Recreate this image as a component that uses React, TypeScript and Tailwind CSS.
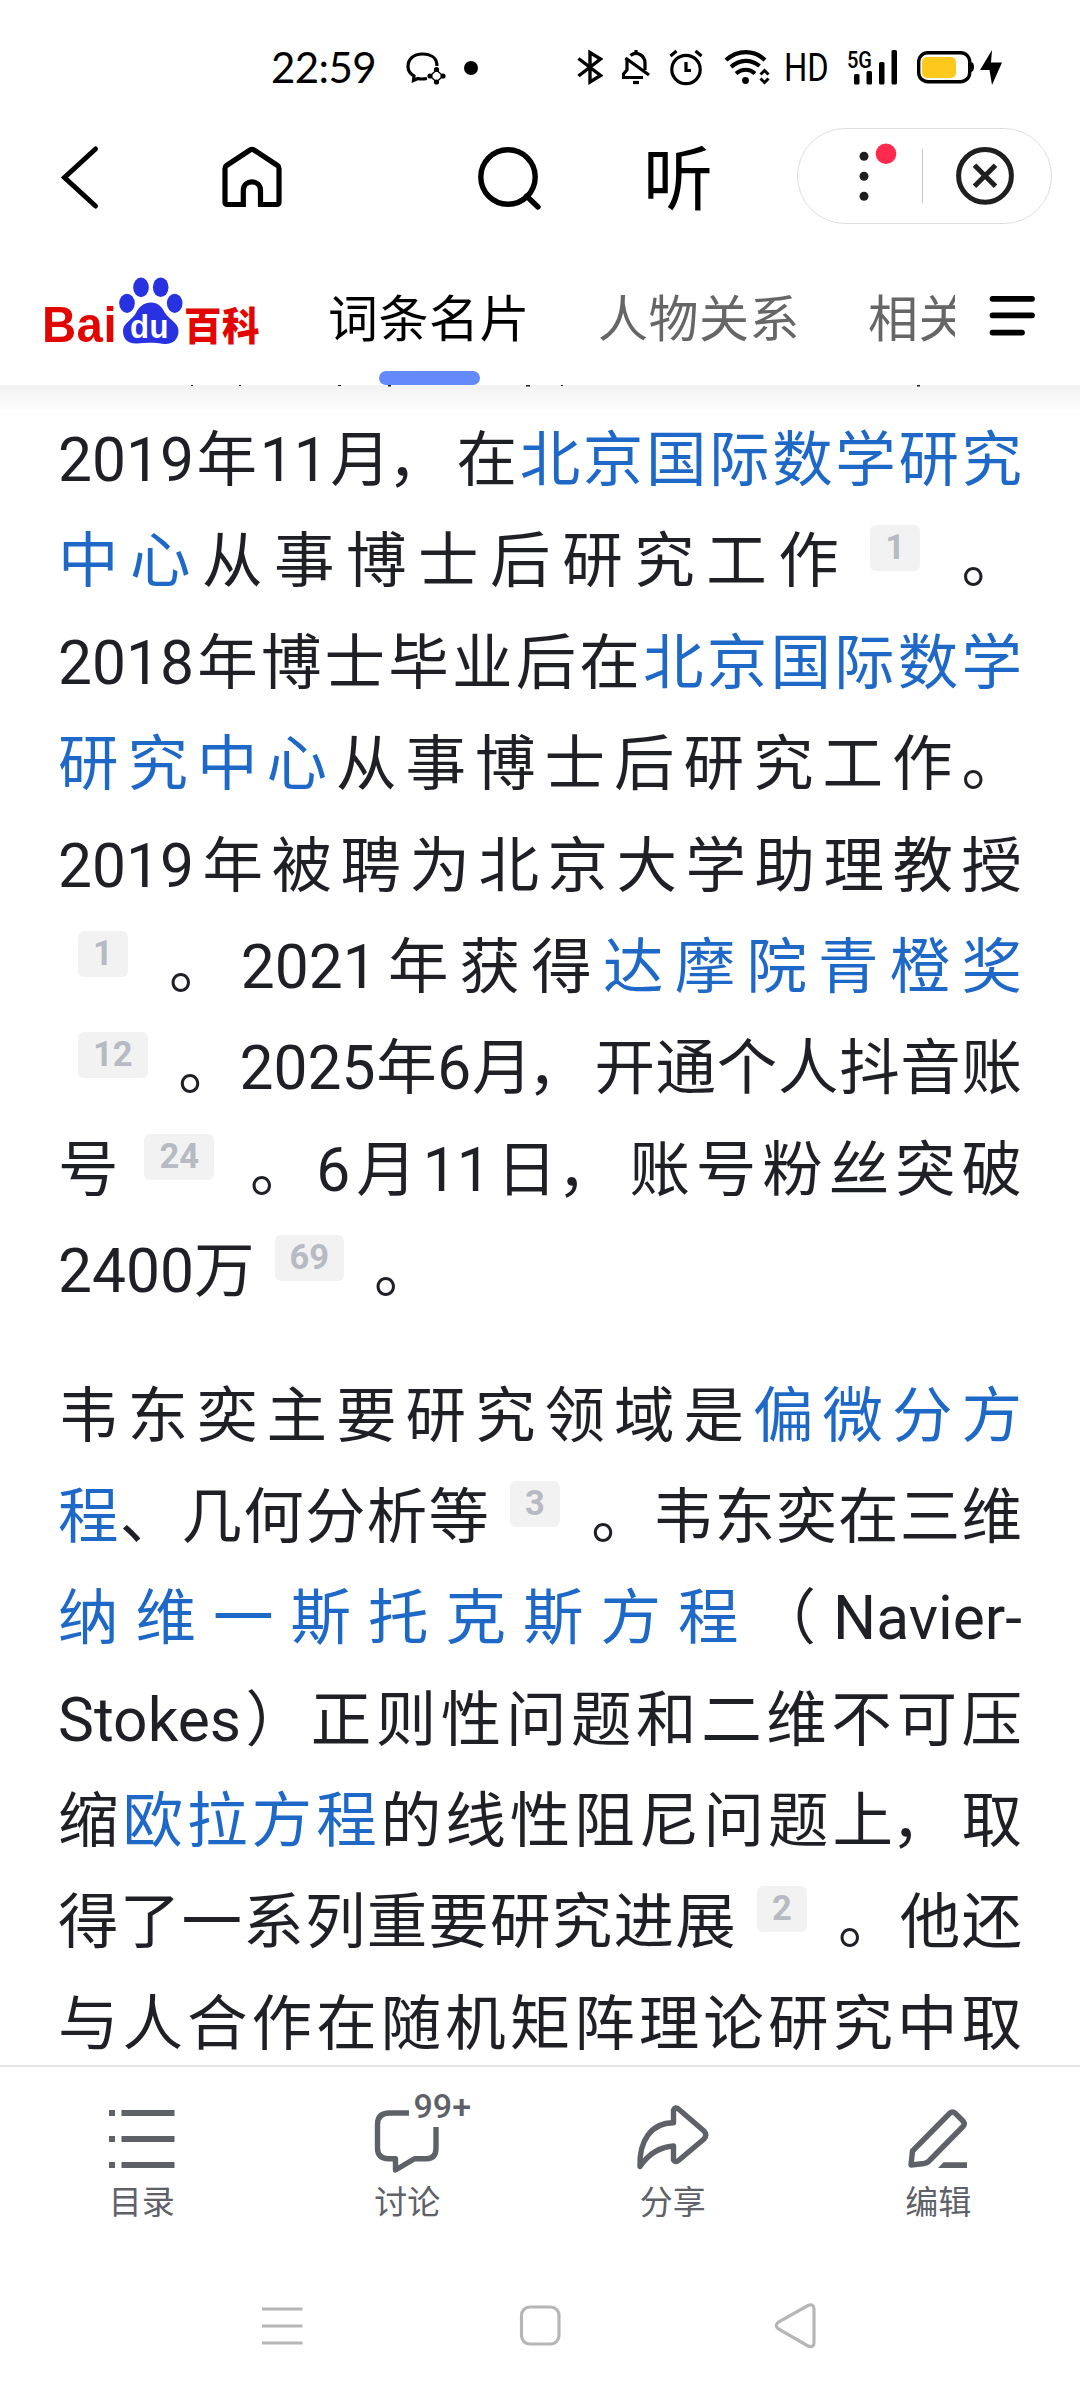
import React from 'react';
import { clsx } from 'clsx';

type Segment = string | { link: string } | { cite: number };

type Line = {
  segments: Segment[];
  last?: boolean; // last line of a paragraph is not justified
};

const CAREER: Line[] = [
  { segments: ['2019年11月，在', { link: '北京国际数学研究' }] },
  { segments: [{ link: '中心' }, '从事博士后研究工作', { cite: 1 }, '。'] },
  { segments: ['2018年博士毕业后在', { link: '北京国际数学' }] },
  { segments: [{ link: '研究中心' }, '从事博士后研究工作。'] },
  { segments: ['2019年被聘为北京大学助理教授'] },
  { segments: [{ cite: 1 }, '。2021年获得', { link: '达摩院青橙奖' }] },
  { segments: [{ cite: 12 }, '。2025年6月，开通个人抖音账'] },
  { segments: ['号', { cite: 24 }, '。6月11日，账号粉丝突破'] },
  { segments: ['2400万', { cite: 69 }, '。'], last: true },
];

const RESEARCH: Line[] = [
  { segments: ['韦东奕主要研究领域是', { link: '偏微分方' }] },
  { segments: [{ link: '程' }, '、几何分析等', { cite: 3 }, '。韦东奕在三维'] },
  { segments: [{ link: '纳维一斯托克斯方程' }, '（Navier-'] },
  { segments: ['Stokes）正则性问题和二维不可压'] },
  { segments: ['缩', { link: '欧拉方程' }, '的线性阻尼问题上，取'] },
  { segments: ['得了一系列重要研究进展', { cite: 2 }, '。他还'] },
  { segments: ['与人合作在随机矩阵理论研究中取'] },
];

const StatusBar = () => (
  <div className="flex h-[128px] items-start pt-[48px] pl-[271px]">
    <span className="w-[106px] font-['Lato'] text-[42px] leading-[38px] tracking-[-0.6px] text-black">22:59</span>

    {/* Chat bubble with a sparkle */}
    <svg className="ml-[28px] h-[38px] w-[42px]" viewBox="405 48 42 38" fill="none">
      <path d="M437 66C437 58 431 54 422.500 54C413.500 54 408 59 408 66.500C408 71 410.500 74 414 76L413.500 80.500L418 78.500C421 79.500 424 79 427 78.500" stroke="black" strokeWidth="3.200" />
      <path d="M436.500 70L443 76L436.500 82L430 76Z" stroke="black" strokeWidth="1.300" />
      <circle cx="436.500" cy="69.500" r="2.600" fill="black" />
      <circle cx="443" cy="76" r="2.600" fill="black" />
      <circle cx="436.500" cy="82" r="2.600" fill="black" />
      <circle cx="430" cy="76" r="2.600" fill="black" />
    </svg>
    <span className="mt-[13px] ml-[17px] size-[14px] rounded-full bg-black" />

    {/* Bluetooth */}
    <svg className="ml-[99px] h-[38px] w-[26px]" viewBox="577 48 26 38" fill="none" stroke="black" strokeWidth="3.400">
      <path d="M578.500 58.500L600.500 75.500L590 82V52.500L600.500 59L578.500 76" />
    </svg>
    {/* Muted bell */}
    <svg className="ml-[19px] h-[38px] w-[28px]" viewBox="622 48 28 38" fill="none" stroke="black" strokeWidth="3.200">
      <path d="M636 50V53M630.500 55.500C633 53.500 637 53 640 54.500C643.500 56.500 645 60 645 63V70M627 60V70L623.500 74V77.500H643M625.500 58L649 75" />
      <path d="M633 82.500H639" />
    </svg>
    {/* Alarm */}
    <svg className="ml-[19px] h-[38px] w-[34px]" viewBox="669 48 34 38" fill="none" stroke="black" strokeWidth="3.200">
      <circle cx="686" cy="69.500" r="14.200" />
      <path d="M686 62V70.500H691M670.500 56L676.500 51M695.500 51L701.500 56" />
    </svg>
    {/* Wi-Fi */}
    <svg className="ml-[21px] h-[38px] w-[46px]" viewBox="724 48 46 38" fill="none" stroke="black" strokeWidth="4.200">
      <path d="M726 60C738 49.500 754 49.500 765 60M731 67C740 59 751 59 759.500 66M736 73.500C742 68.500 749.500 68.500 755 73.500" />
      <circle cx="745.500" cy="80.500" r="3.400" fill="black" stroke="none" />
      <path d="M760.500 74.500L764.500 70.500L768.500 74.500M760.500 78.500L764.500 82.500L768.500 78.500" strokeWidth="3" />
    </svg>
    <span className="ml-[14px] w-[47px] origin-left scale-x-[0.86] font-['Roboto'] text-[38px] leading-[40px] text-black">HD</span>

    {/* Signal strength */}
    <svg className="ml-[15px] h-[38px] w-[52px] overflow-visible" viewBox="846 48 52 38">
      <text x="847" y="67.500" textLength="25" lengthAdjust="spacingAndGlyphs" fontFamily="Roboto" fontSize="24" fontWeight="500">5G</text>
      <rect x="854" y="74" width="5.500" height="10.500" rx="1.500" />
      <rect x="866.500" y="71" width="5.500" height="13.500" rx="1.500" />
      <rect x="879" y="62" width="5.500" height="22.500" rx="1.500" />
      <rect x="891.500" y="50" width="5.500" height="34.500" rx="1.500" />
    </svg>
    {/* Battery */}
    <svg className="ml-[18px] h-[38px] w-[88px]" viewBox="916 48 88 38">
      <rect x="918.700" y="52.700" width="51" height="29" rx="9" fill="none" stroke="black" strokeWidth="3.400" />
      <rect x="922" y="57" width="34" height="21" rx="5" fill="#fdc91d" />
      <path d="M971 62C975 62 975 72 971 72Z" />
      <path d="M992 50L980 70H989.500L992 85L1002 62.500H991Z" />
    </svg>
  </div>
);

const NavBar = () => (
  <div className="flex h-[96px] items-center">
    <svg className="ml-[60px] h-[70px] w-[42px]" viewBox="60 141 42 70" fill="none" stroke="black" strokeWidth="5" strokeLinecap="round">
      <path d="M95.500 149L64.500 177.500L95.500 206" />
    </svg>
    <svg className="ml-[118px] h-[70px] w-[64px]" viewBox="220 141 64 70" fill="none" stroke="black" strokeWidth="5.200">
      <path d="M243.300 207V190.500C243.300 179 260.500 179 260.500 190.500V204.500H276.500Q279 204.500 279 202V168.500Q279 166.500 277.500 165.500L254 150Q252 148.800 250 150L226.500 165.500Q225 166.500 225 168.500V202Q225 204.500 227.500 204.500H243.300" />
    </svg>
    <svg className="ml-[192px] h-[70px] w-[68px]" viewBox="476 141 68 70" fill="none" stroke="black" strokeWidth="5.400">
      <circle cx="508" cy="177" r="27.200" />
      <path d="M526.500 196L538 207" strokeLinecap="round" />
    </svg>
    <span className="ml-[99px] font-['Noto_Sans_CJK_SC'] text-[70px] leading-[92px] text-black">
      <span className="block -translate-y-[1px]">听</span>
    </span>
    <div className="ml-[84px] flex h-[96px] w-[255px] items-center rounded-full border border-[#dedede]">
      <svg className="ml-[50px] h-[70px] w-[50px]" viewBox="848 141 50 70" fill="#1f1f1f">
        <circle cx="864" cy="156.200" r="4.500" />
        <circle cx="864" cy="176.200" r="4.500" />
        <circle cx="864" cy="196.200" r="4.500" />
        <circle cx="886" cy="153.800" r="10.300" fill="#ff2a4d" />
      </svg>
      <span className="ml-[24px] h-[54px] w-px bg-[#c8c8c8]" />
      <svg className="ml-[31px] h-[62px] w-[62px]" viewBox="953.500 145 62 62" fill="none" stroke="#1f1f1f" strokeWidth="5">
        <circle cx="984.500" cy="175.800" r="26.400" />
        <path d="M974 165.300L995 186.300M995 165.300L974 186.300" />
      </svg>
    </div>
  </div>
);

const BaikeLogo = () => (
  <svg className="ml-[40px] h-[80px] w-[224px] overflow-visible" viewBox="40 269 224 80">
    <text x="42" y="342" textLength="75" lengthAdjust="spacingAndGlyphs" fill="#e10601" fontFamily="Liberation Sans" fontSize="50" fontWeight="700">Bai</text>
    <g fill="#2932e1">
      <ellipse cx="127" cy="303.300" rx="7.800" ry="9.600" />
      <ellipse cx="141" cy="287.400" rx="7.800" ry="9.800" />
      <ellipse cx="160.700" cy="287.200" rx="7.800" ry="9.800" />
      <ellipse cx="174.700" cy="303.300" rx="7.800" ry="9.600" />
      <path d="M151 302.500C143 302.500 138 308 136 313C132 320 123 323 123 331C123 340 129 344 137 343.500C146 342.500 156 342.500 164 344C173 344.500 178.500 339 178.500 331C178.500 323 170 320 165 313C162 307 158 302.500 151 302.500Z" />
    </g>
    <text x="130" y="338" textLength="39" lengthAdjust="spacingAndGlyphs" fill="white" fontFamily="Liberation Sans" fontSize="33" fontWeight="700">du</text>
    <text x="184" y="339.500" textLength="76" lengthAdjust="spacingAndGlyphs" fill="#e10601" fontFamily="Noto Sans CJK SC" fontSize="38.500" fontWeight="900">百科</text>
  </svg>
);

const TabBar = () => (
  <div className="flex h-[161px] font-['Noto_Sans_CJK_SC'] text-[50px] tracking-[0.5px]">
    <div className="pt-[45px]">
      <BaikeLogo />
    </div>
    <div className="ml-[64px] flex w-[627px] gap-[68px] overflow-hidden leading-[184px] whitespace-nowrap text-[#666666]">
      <div className="flex shrink-0 flex-col items-center">
        <span className="h-[147px] text-black">
          <span className="block -translate-y-[1px]">词条名片</span>
        </span>
        <span className="h-[14px] w-[101px] rounded-full bg-[#6489f8]" />
      </div>
      <span className="shrink-0 -translate-y-[1px]">人物关系</span>
      <span className="shrink-0 -translate-y-[1px]">相关</span>
    </div>
    <svg className="mt-[68px] ml-[34px] h-[46px] w-[48px]" viewBox="989 292 48 46" stroke="black" strokeWidth="5.800" strokeLinecap="round">
      <path d="M992.500 298.800H1032M992.500 315.300H1032M992.500 332.600H1022" />
    </svg>
  </div>
);

// Full-width commas sit close to the preceding character
const renderText = (text: string) =>
  text.split(/(，)/).map((part, i) =>
    part === '，' ? (
      <span key={i} className="mr-[6px] -ml-[6px]">，</span>
    ) : (
      part
    ),
  );

const Paragraph = ({ lines }: { lines: Line[] }) => (
  <div>
    {lines.map((line, i) => (
      <p
        key={i}
        className={clsx('h-[101.4px] whitespace-nowrap', !line.last && 'text-justify [text-align-last:justify]')}
      >
        {line.segments.map((seg, j) => {
          if (typeof seg === 'string') return <span key={j}>{renderText(seg)}</span>;
          if ('link' in seg) return <a key={j} className="text-[#1e68c8]">{seg.link}</a>;
          return (
            <span
              key={j}
              className="mr-[30px] ml-[20px] rounded-[6px] bg-[#f2f2f3] px-[15px] pt-[2px] pb-[4px] align-[23px] text-[34.5px] leading-none font-bold text-[#b7bac2]"
            >
              {seg.cite}
            </span>
          );
        })}
      </p>
    ))}
  </div>
);

const TOOLS = [
  {
    label: '目录',
    icon: (
      <svg className="h-[74px] w-[80px]" viewBox="102 2104 80 74" stroke="#5f6168" strokeWidth="5.800">
        <path d="M109 2113H115M121.500 2113H174.500M109 2139H115M121.500 2139H174.500M109 2165H115M121.500 2165H174.500" />
      </svg>
    ),
  },
  {
    label: '讨论',
    badge: '99+',
    icon: (
      <svg className="h-[74px] w-[80px]" viewBox="367.500 2104 80 74" fill="none" stroke="#5f6168" strokeWidth="5.400">
        <path d="M409.500 2113H390Q378 2113 378 2124.500V2148Q378 2158.700 389 2158.700H396V2170L415 2158.700H427Q436.500 2158.700 436.500 2148V2127" strokeLinejoin="round" />
      </svg>
    ),
  },
  {
    label: '分享',
    icon: (
      <svg className="h-[74px] w-[80px]" viewBox="633 2104 80 74" fill="none" stroke="#5f6168" strokeWidth="5.400" strokeLinejoin="round">
        <path d="M673.500 2122.700V2110Q675.500 2106.500 678.500 2109L704 2131Q707.500 2135 704 2139L678.500 2160.500Q675.500 2163 673.500 2160V2146C660 2147 649 2153 640 2166.500C639 2141 651 2122.700 673.500 2122.700Z" />
      </svg>
    ),
  },
  {
    label: '编辑',
    icon: (
      <svg className="h-[74px] w-[80px]" viewBox="898 2104 80 74" fill="none" stroke="#5f6168" strokeWidth="5.400" strokeLinejoin="round">
        <path d="M912.500 2151L949.500 2113.500Q952.500 2110.500 955.500 2113.500L963 2121Q965.500 2124 963 2126.500L928.500 2161.500Q927 2163 924 2163.500L911 2165L912.500 2151Z" />
        <path d="M938 2168L943.500 2162.300H967V2168Z" fill="#5f6168" stroke="none" />
      </svg>
    ),
  },
];

const BottomBar = () => (
  <div className="grid h-[205px] grid-cols-4 border-t-2 border-[#e4e4e4] bg-white px-[9px]">
    {TOOLS.map((tool) => (
      <div key={tool.label} className="relative flex flex-col items-center pt-[37px] text-[#5f6168]">
        {tool.icon}
        {tool.badge && (
          <span className="absolute top-[19px] left-[139px] font-['Roboto'] text-[34px] leading-[40px] font-medium">
            {tool.badge}
          </span>
        )}
        <span className="mt-[2px] font-['Noto_Sans_CJK_SC'] text-[33px] leading-[40px]">{tool.label}</span>
      </div>
    ))}
  </div>
);

const SystemNav = () => (
  <div className="flex h-[130px] items-start pt-[28px]">
    <svg className="ml-[260px] h-[56px] w-[44px]" viewBox="260 2298 44 56" stroke="#b6b6b6" strokeWidth="3.200">
      <path d="M262 2309H302.500M262 2326H302.500M262 2343H302.500" />
    </svg>
    <svg className="ml-[212px] h-[56px] w-[48px]" viewBox="516 2298 48 56" fill="none" stroke="#b6b6b6" strokeWidth="3.200">
      <rect x="521.500" y="2307" width="37.500" height="37" rx="8.500" />
    </svg>
    <svg className="ml-[208px] h-[56px] w-[48px]" viewBox="772 2298 48 56" fill="none" stroke="#b6b6b6" strokeWidth="3.200">
      <path d="M808 2305.500L778.500 2322Q774 2325.500 778.500 2329L808 2346Q814 2348 814 2342.500V2309Q814 2303.500 808 2305.500Z" />
    </svg>
  </div>
);

export default function App() {
  return (
    <div lang="zh-CN" className="flex h-[2400px] w-[1080px] flex-col overflow-hidden bg-white">
      <header className="shrink-0">
        <StatusBar />
        <NavBar />
        <TabBar />
      </header>

      <main className="min-h-0 flex-1 overflow-hidden">
        {/* Shadow cast by the sticky header, with the tails of the line scrolled under it */}
        <div className="h-[24px] bg-gradient-to-b from-[#f2f2f2] to-[#fdfdfd]">
          <svg className="block h-[2px] w-[1080px]" viewBox="0 385 1080 2" fill="#1f2026">
            <path d="M191 385h2v1h-2zM239 385h2v1h-2zM338 385h3v1h-3zM388 385h3v1.500h-3zM526 385h4v1.500h-4zM561 385h2v1h-2zM917 385h3v1.500h-3z" />
          </svg>
        </div>
        <article className="flex flex-col gap-[43px] pr-[58px] pl-[58px] font-['Roboto','Noto_Sans_CJK_SC',sans-serif] text-[60.5px] leading-[101.4px] text-[#1f2026] [text-spacing-trim:space-all]">
          <div className="h-[1px] -mb-[43px]" />
          <Paragraph lines={CAREER} />
          <Paragraph lines={RESEARCH} />
        </article>
      </main>

      <footer className="shrink-0">
        <BottomBar />
        <SystemNav />
      </footer>
    </div>
  );
}
